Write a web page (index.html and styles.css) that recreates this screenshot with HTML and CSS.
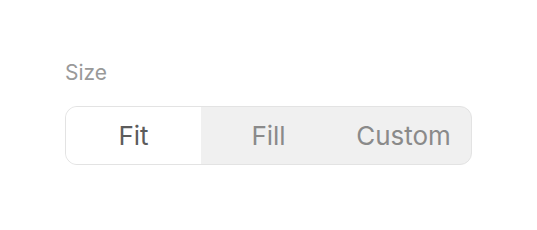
FILE: index.html
```html
<!DOCTYPE html>
<html lang="en">
<head>
    <meta charset="UTF-8">
    <meta name="viewport" content="width=device-width, initial-scale=1.0">
    <title>Size</title>
    <link rel="stylesheet" href="styles.css">
</head>
<body>
    <div class="field">
        <div class="label">Size</div>
        <div class="segmented">
            <button class="segment active">Fit</button>
            <button class="segment">Fill</button>
            <button class="segment">Custom</button>
        </div>
    </div>
</body>
</html>
```

FILE: styles.css
```css
body {
    margin: 0;
    padding: 60px 65px;
    background: #ffffff;
    font-family: Inter, "Noto Sans", sans-serif;
}
.field {
    width: 407px;
}
.label {
    color: #999999;
    font-size: 21px;
    line-height: 26px;
    margin-bottom: 20px;
}
.segmented {
    display: flex;
    background: #f0f0f0;
    border: 1px solid #e3e3e3;
    border-radius: 12px;
    overflow: hidden;
    height: 57px;
}
.segment {
    flex: 1;
    border: none;
    background: transparent;
    font-family: inherit;
    font-size: 26px;
    color: #8a8a8a;
    padding: 0;
    cursor: pointer;
}
.segment.active {
    background: #ffffff;
    color: #5c5c5c;
}
```
